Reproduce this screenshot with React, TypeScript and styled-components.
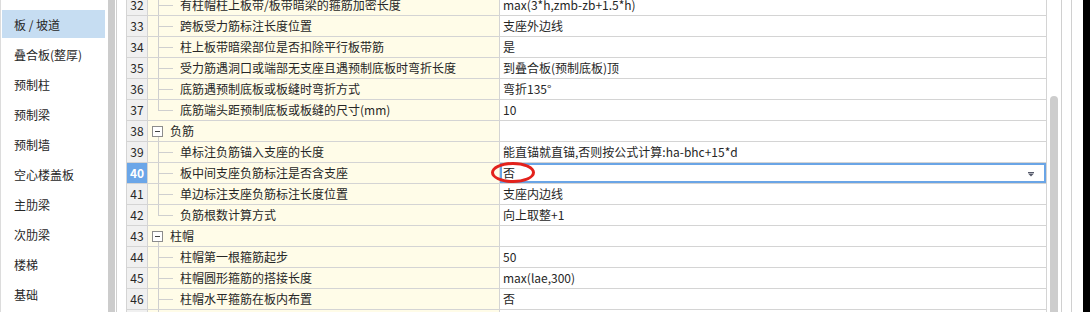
import React from 'react';
import styled, { createGlobalStyle } from 'styled-components';

const GlobalStyle = createGlobalStyle`
    html, body {
        margin: 0;
        padding: 0;
        background: #ffffff;
    }
    body {
        font-family: 'Noto Sans CJK SC', 'Microsoft YaHei', sans-serif;
        font-size: 12px;
        color: #262626;
    }
`;

// Layout
const Frame = styled.div`
    display: flex;
    width: 1090px;
    height: 312px;
    overflow: hidden;
    background: #ffffff;
`;

const Sidebar = styled.div`
    display: flex;
    flex-direction: column;
    gap: 2px;
    width: 108px;
    flex: none;
    box-sizing: border-box;
    padding: 10px 3px 0 1px;
    border-left: 1px solid #dcdcdc;
`;

const NavItem = styled.div<{ active?: boolean }>`
    display: flex;
    align-items: center;
    height: 28px;
    padding-left: 12px;
    background: ${props => (props.active ? '#c6ddf2' : 'transparent')};
    color: #262626;
    white-space: nowrap;
`;

const Splitter = styled.div`
    width: 7px;
    flex: none;
    background: #cccccc;
`;

const PaneEdge = styled.div`
    width: 9px;
    flex: none;
    margin-left: 1px;
    border-left: 1px solid #d0d0d0;
`;

// Property grid
const Grid = styled.div`
    width: 921px;
    flex: none;
    margin-top: -5px;
    border-left: 1px solid #d4d4d4;
    box-sizing: border-box;
`;

const Row = styled.div`
    display: grid;
    grid-template-columns: 21px 352px 547px;
    height: 21px;
`;

const Cell = styled.div`
    position: relative;
    box-sizing: border-box;
    height: 21px;
    border-right: 1px solid #d4d4d4;
    border-bottom: 1px solid #d4d4d4;
    line-height: 20px;
    white-space: nowrap;
`;

const NumCell = styled(Cell)<{ selected?: boolean }>`
    text-align: center;
    background: ${props => (props.selected ? '#6ba6e8' : '#f0f0f0')};
    color: ${props => (props.selected ? '#ffffff' : '#262626')};
    font-weight: ${props => (props.selected ? 700 : 400)};
`;

const NameCell = styled(Cell)`
    display: flex;
    align-items: center;
    background: #fffce8;
`;

const ValueCell = styled(Cell)<{ editing?: boolean }>`
    padding-left: 3px;
    background: #ffffff;
    &::after {
        content: '';
        display: ${props => (props.editing ? 'block' : 'none')};
        position: absolute;
        inset: 0;
        border: 2px solid #6aa5e6;
    }
`;

const Guide = styled.span<{ last?: boolean }>`
    position: relative;
    width: 32px;
    height: 100%;
    flex: none;
    &::before {
        content: '';
        position: absolute;
        left: 10px;
        top: 0;
        width: 1px;
        height: ${props => (props.last ? '50%' : '100%')};
        background: #cfcfcf;
    }
    &::after {
        content: '';
        position: absolute;
        left: 10px;
        top: 10px;
        width: 15px;
        height: 1px;
        background: #cfcfcf;
    }
`;

const GroupToggle = styled.span`
    position: relative;
    width: 22px;
    height: 100%;
    flex: none;
    &::before {
        content: '';
        position: absolute;
        left: 10px;
        top: 15px;
        bottom: 0;
        width: 1px;
        background: #cfcfcf;
    }
`;

const ToggleBox = styled.span`
    position: absolute;
    left: 4px;
    top: 5px;
    width: 11px;
    height: 11px;
    box-sizing: border-box;
    border: 1px solid #8c8c8c;
    background: #ffffff;
    &::after {
        content: '';
        position: absolute;
        left: 2px;
        top: 4px;
        width: 5px;
        height: 1px;
        background: #444444;
    }
`;

const DropArrow = styled.svg`
    position: absolute;
    right: 12px;
    top: 9px;
`;

const Mark = styled.span`
    position: absolute;
    left: -9px;
    top: -1px;
    width: 44px;
    height: 21px;
    box-sizing: border-box;
    border: 3px solid #e3221c;
    border-radius: 50%;
    z-index: 2;
`;

// Right edge
const ScrollArea = styled.div`
    width: 14px;
    flex: none;
    padding: 96px 3px 0 3px;
    box-sizing: border-box;
`;

const Thumb = styled.div`
    width: 8px;
    height: 260px;
    background: #cdcdcd;
    border-radius: 4px 4px 0 0;
`;

const Divider = styled.div`
    width: 9px;
    flex: none;
    border-left: 1px solid #d0d0d0;
    border-right: 1px solid #d0d0d0;
`;

const WindowEdge = styled.div`
    width: 7px;
    flex: none;
    margin-left: 11px;
    background: #000000;
`;

type GridRow =
    | { no: number; group: string }
    | { no: number; name: string; value: string; last?: boolean; editing?: boolean };

const navItems = ['板 / 坡道', '叠合板(整厚)', '预制柱', '预制梁', '预制墙', '空心楼盖板', '主肋梁', '次肋梁', '楼梯', '基础'];

const rows: GridRow[] = [
    { no: 32, name: '有柱帽柱上板带/板带暗梁的箍筋加密长度', value: 'max(3*h,zmb-zb+1.5*h)' },
    { no: 33, name: '跨板受力筋标注长度位置', value: '支座外边线' },
    { no: 34, name: '柱上板带暗梁部位是否扣除平行板带筋', value: '是' },
    { no: 35, name: '受力筋遇洞口或端部无支座且遇预制底板时弯折长度', value: '到叠合板(预制底板)顶' },
    { no: 36, name: '底筋遇预制底板或板缝时弯折方式', value: '弯折135°' },
    { no: 37, name: '底筋端头距预制底板或板缝的尺寸(mm)', value: '10', last: true },
    { no: 38, group: '负筋' },
    { no: 39, name: '单标注负筋锚入支座的长度', value: '能直锚就直锚,否则按公式计算:ha-bhc+15*d' },
    { no: 40, name: '板中间支座负筋标注是否含支座', value: '否', editing: true },
    { no: 41, name: '单边标注支座负筋标注长度位置', value: '支座内边线' },
    { no: 42, name: '负筋根数计算方式', value: '向上取整+1', last: true },
    { no: 43, group: '柱帽' },
    { no: 44, name: '柱帽第一根箍筋起步', value: '50' },
    { no: 45, name: '柱帽圆形箍筋的搭接长度', value: 'max(lae,300)' },
    { no: 46, name: '柱帽水平箍筋在板内布置', value: '否' },
    { no: 47, name: '', value: '' },
];

const App: React.FC = () => {
    return (
        <>
            <GlobalStyle />
            <Frame>
                <Sidebar>
                    {navItems.map((item, index) => (
                        <NavItem key={item} active={index === 0}>
                            {item}
                        </NavItem>
                    ))}
                </Sidebar>
                <Splitter />
                <PaneEdge />

                <Grid>
                    {rows.map(row => (
                        <Row key={row.no}>
                            <NumCell selected={'editing' in row && row.editing}>{row.no}</NumCell>
                            {'group' in row ? (
                                <>
                                    <NameCell>
                                        <GroupToggle>
                                            <ToggleBox />
                                        </GroupToggle>
                                        {row.group}
                                    </NameCell>
                                    <ValueCell />
                                </>
                            ) : (
                                <>
                                    <NameCell>
                                        <Guide last={row.last} />
                                        {row.name}
                                    </NameCell>
                                    <ValueCell editing={row.editing}>
                                        {row.value}
                                        {row.editing && (
                                            <>
                                                <Mark />
                                                <DropArrow width="6" height="5" viewBox="0 0 6 5">
                                                    <rect x="0" y="0" width="6" height="1" fill="#55596a" />
                                                    <path d="M0 1.5 H6 L3 4.5 Z" fill="#55596a" />
                                                </DropArrow>
                                            </>
                                        )}
                                    </ValueCell>
                                </>
                            )}
                        </Row>
                    ))}
                </Grid>

                <ScrollArea>
                    <Thumb />
                </ScrollArea>
                <Divider />
                <WindowEdge />
            </Frame>
        </>
    );
};

export default App;
